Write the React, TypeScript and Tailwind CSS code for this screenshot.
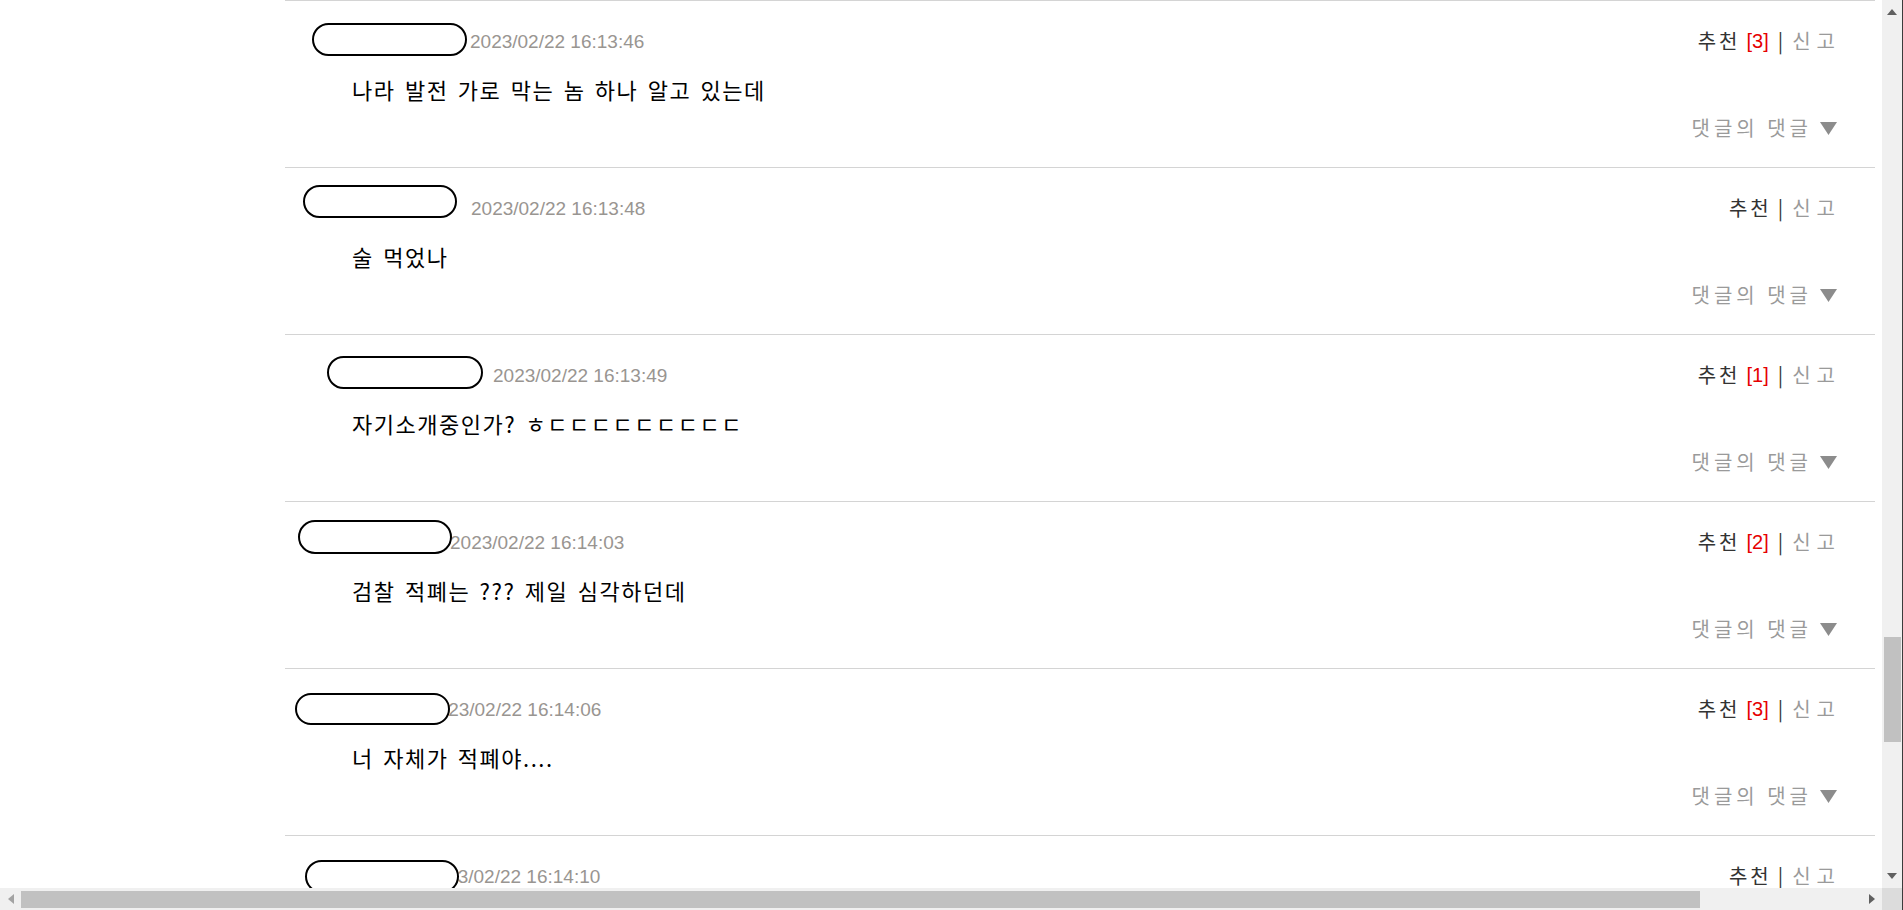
import React from "react";

type Comment = {
  nickW: number;
  oval: { left: number; top: number; w: number; h: number };
  date: string;
  text: string;
  likes?: number;
};

const comments: Comment[] = [
  { nickW: 158, oval: { left: 27, top: 22, w: 155, h: 33 }, date: "2023/02/22 16:13:46", text: "나라 발전 가로 막는 놈 하나 알고 있는데", likes: 3 },
  { nickW: 159, oval: { left: 18, top: 17, w: 154, h: 33 }, date: "2023/02/22 16:13:48", text: "술 먹었나" },
  { nickW: 181, oval: { left: 42, top: 21, w: 156, h: 33 }, date: "2023/02/22 16:13:49", text: "자기소개중인가? ㅎㄷㄷㄷㄷㄷㄷㄷㄷㄷ", likes: 1 },
  { nickW: 138, oval: { left: 13, top: 18, w: 154, h: 34 }, date: "2023/02/22 16:14:03", text: "검찰 적폐는 ??? 제일 심각하던데", likes: 2 },
  { nickW: 115, oval: { left: 10, top: 24, w: 155, h: 32 }, date: "2023/02/22 16:14:06", text: "너 자체가 적폐야....", likes: 3 },
  { nickW: 114, oval: { left: 20, top: 24, w: 154, h: 33 }, date: "2023/02/22 16:14:10", text: "" },
];

const kr = "font-['Noto_Sans_CJK_KR','Noto_Sans',sans-serif]";

function CommentRow({ c }: { c: Comment }) {
  return (
    <div className="relative h-[167px] border-t border-[#d4d4d4]">
      {/* header */}
      <div className="flex items-center justify-between pt-[23px] h-[57px] pl-[27px] pr-[40px]">
        <div className="flex items-center">
          <span className="inline-block" style={{ width: c.nickW }} />
          <span className="font-['Liberation_Sans',Arial,sans-serif] text-[19px] text-[#999591] leading-none">
            {c.date}
          </span>
        </div>
        <div className={`flex items-center gap-[9px] text-[20px] leading-none ${kr}`}>
          <span className="text-[#333] tracking-[3px] -mr-[3px]">추천</span>
          {c.likes !== undefined && (
            <span className="text-[#e60000] font-['Liberation_Sans',Arial,sans-serif] text-[20px]">[{c.likes}]</span>
          )}
          <span className="text-[#333]">|</span>
          <span className="text-[#9a9a9a] tracking-[6px] -mr-[6px]">신고</span>
        </div>
      </div>

      {/* body */}
      <p className={`mt-[16px] pl-[67px] h-[30px] leading-[30px] text-[22px] text-black tracking-[1.5px] [word-spacing:3px] ${kr}`}>
        {c.text}
      </p>

      {/* reply toggle */}
      <div className="mt-[12px] flex justify-end pr-[38px]">
        <div className={`flex items-center h-[24px] gap-[8px] text-[20px] text-[#9a9a9a] tracking-[4px] ${kr}`}>
          <span>댓글의 댓글</span>
          <svg width="17" height="13" viewBox="0 0 17 13">
            <polygon points="0,0 17,0 8.5,13" fill="#8c8c8c" />
          </svg>
        </div>
      </div>

      {/* nickname redaction */}
      <div
        className="absolute rounded-full border-2 border-black bg-white"
        style={{ left: c.oval.left, top: c.oval.top, width: c.oval.w, height: c.oval.h }}
      />
    </div>
  );
}

function VScroll() {
  return (
    <div className="w-[21px] bg-[#f0f0f0] border-r border-[#3c3c3c] flex flex-col items-center">
      <div className="h-[24px] flex items-center justify-center">
        <svg width="10" height="6" viewBox="0 0 10 6">
          <polygon points="0,6 10,6 5,0" fill="#606060" />
        </svg>
      </div>
      <div className="mt-[613px] w-[17px] h-[105px] bg-[#c1c1c1]" />
      <div className="flex-1" />
      <div className="h-[24px] flex items-center justify-center">
        <svg width="10" height="6" viewBox="0 0 10 6">
          <polygon points="0,0 10,0 5,6" fill="#606060" />
        </svg>
      </div>
    </div>
  );
}

function HScroll() {
  return (
    <div className="h-[22px] flex">
      <div className="flex-1 bg-[#f0f0f0] flex items-center">
        <div className="w-[21px] flex items-center justify-center">
          <svg width="6" height="10" viewBox="0 0 6 10">
            <polygon points="6,0 6,10 0,5" fill="#a3a3a3" />
          </svg>
        </div>
        <div className="w-[1679px] h-[17px] bg-[#c1c1c1]" />
        <div className="flex-1" />
        <div className="w-[21px] flex items-center justify-center">
          <svg width="6" height="10" viewBox="0 0 6 10">
            <polygon points="0,0 0,10 6,5" fill="#606060" />
          </svg>
        </div>
      </div>
      <div className="w-[21px] bg-[#dcdcdc] border-r border-[#3c3c3c]" />
    </div>
  );
}

export default function App() {
  return (
    <div className="w-[1903px] h-[910px] flex flex-col overflow-hidden bg-white">
      <div className="flex flex-1 min-h-0">
        <main className="flex-1 overflow-hidden">
          <div className="ml-[285px] w-[1590px]">
            {comments.map((c, i) => (
              <CommentRow key={i} c={c} />
            ))}
          </div>
        </main>
        <VScroll />
      </div>
      <HScroll />
    </div>
  );
}
